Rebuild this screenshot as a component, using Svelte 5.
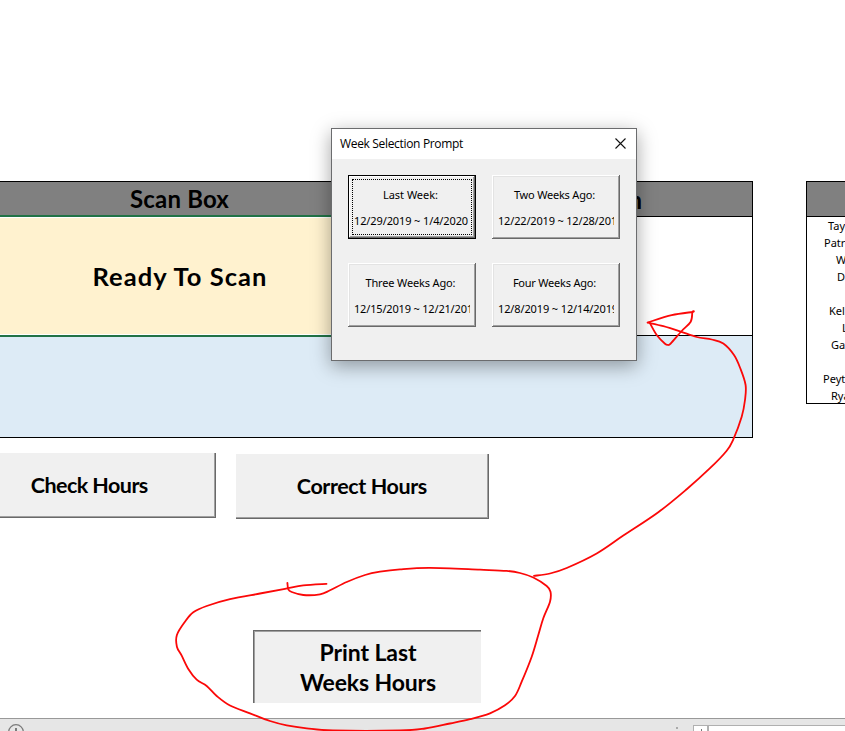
<script>
  const people = ['Taylor', 'Patrick', 'Will', 'Dan', '', 'Kelly', 'Leo', 'Gavin', '', 'Peyton', 'Ryan'];
  const indents = [21, 17, 29, 30, 0, 22, 35, 24, 0, 16, 24];
  const weeks = [
    { title: 'Last Week:', tw: 55, dates: '12/29/2019 ~ 1/4/2020', dw: 114, focused: true },
    { title: 'Two Weeks Ago:', tw: 81, dates: '12/22/2019 ~ 12/28/2019', dw: 125 },
    { title: 'Three Weeks Ago:', tw: 90, dates: '12/15/2019 ~ 12/21/2019', dw: 125 },
    { title: 'Four Weeks Ago:', tw: 83, dates: '12/8/2019 ~ 12/14/2019', dw: 120 }
  ];

  // Spreads the letters of a label so that it spans the given width.
  function span(node, width) {
    const apply = () => {
      node.style.letterSpacing = '0px';
      const gap = (width - node.getBoundingClientRect().width) / node.textContent.length;
      node.style.letterSpacing = `${gap}px`;
      node.style.marginRight = `${-gap}px`;
    };
    apply();
    document.fonts?.ready.then(apply);
  }

  // Smooth curve through a list of points.
  function curve(p) {
    let d = `M${p[0]}`;
    for (let i = 0; i < p.length - 1; i++) {
      const a = p[i - 1] ?? p[i], b = p[i], c = p[i + 1], e = p[i + 2] ?? c;
      d += `C${b[0] + (c[0] - a[0]) / 6},${b[1] + (c[1] - a[1]) / 6} ${c[0] - (e[0] - b[0]) / 6},${c[1] - (e[1] - b[1]) / 6} ${c}`;
    }
    return d;
  }

  const strokes = [
    [[287.4,583],[288.3,589.3],[291.7,592],[303.3,595],[320,594.3],[330,590.3],[346.7,582],[365,575],[380,571.7],[400,569.3],[430,567.9],[480,569.7],[506.7,570.9],[520,573],[533.3,577.5],[546.7,586],[550.5,591.7],[550,601.7],[543.3,618.3],[538.3,635],[531.7,656.7],[521.7,681.7],[515,696],[505,705.3],[490,713.3],[470,719.2],[450,723.5],[425,728.5],[400,730.5],[333,730.5],[306.7,728.3],[286.7,725.3],[270,721],[250,713.3],[230,705.5],[216.7,696],[206.7,686],[196.7,679.7],[188.3,669],[181.7,655.7],[176.9,646.7],[176.9,635],[185,621.7],[193.3,612.3],[206.7,606],[230,599.2],[260,593.5],[285,588.9],[303.3,585.4],[326.5,583.9]],
    [[534,575.9],[550,573.5],[566.7,568],[596.7,553.5],[623.3,535.6],[658.3,512.2],[686.7,489.2],[710,468.2],[726.7,450.7],[733.3,439.3],[741.7,416.7],[745,400],[745.6,385],[740.3,368.3],[734,355],[723.3,343.5],[711.7,339.5],[696.7,337],[680,331.3],[663.3,326.2],[648,322.7]],
    [[647.5,322.5],[671.7,315.2],[692.3,312],[692.3,312],[690.7,321.7],[681.7,331],[670.7,343.5],[668,344.9],[665,343.7],[656.7,335],[650,323.3]]
  ];
</script>

<main>
  <section class="sheet">
    <div class="grid">
      <div class="scan">
        <header><b use:span={99}>Scan Box</b></header>
        <div class="ready"><b use:span={175}>Ready To Scan</b></div>
        <div class="blue"></div>
      </div>
      <div class="info">
        <header><b>n</b></header>
        <div class="blank"></div>
        <div class="blue"></div>
      </div>
    </div>
    <div class="people">
      <header></header>
      {#each people as name, i}
        <div class="person" style:padding-left="{indents[i]}px">{name}</div>
      {/each}
    </div>
  </section>

  <section class="actions">
    <button class="big check"><b use:span={117}>Check Hours</b></button>
    <button class="big correct"><b use:span={130}>Correct Hours</b></button>
  </section>
  <button class="big print"><b use:span={97}>Print Last</b><b use:span={136}>Weeks Hours</b></button>

  <footer>
    <svg class="add" width="18" height="12" viewBox="0 0 18 12"><circle cx="9" cy="9" r="7.3" /><path d="M9 5v7" /></svg>
    <i class="dot"></i>
    <div class="scroll"><div class="cell"><svg width="4" height="4" viewBox="0 0 4 4"><path d="M2 0H3V4H0V2H2Z" /></svg></div></div>
  </footer>

  <div class="dialog">
    <div class="title">
      <span use:span={123}>Week Selection Prompt</span>
      <svg width="11" height="11" viewBox="0 0 11 11"><path d="M.5 .5l10 10M10.5 .5l-10 10" /></svg>
    </div>
    <div class="weeks">
      {#each weeks as w}
        <button class="week" class:focused={w.focused}>
          <span class="line"><span use:span={w.tw}>{w.title}</span></span>
          <span class="line dates"><span use:span={w.dw}>{w.dates}</span></span>
        </button>
      {/each}
    </div>
  </div>

  <svg class="ink" width="845" height="731" viewBox="0 0 845 731">
    {#each strokes as s}<path d={curve(s)} />{/each}
  </svg>
</main>

<style>
  main { position: relative; width: 845px; height: 731px; overflow: hidden; background: #fff; color: #000; display: flex; flex-direction: column; box-sizing: border-box; padding-top: 181px; font-family: Lato, "Liberation Sans", sans-serif; }
  main * { box-sizing: border-box; }
  b, span { white-space: nowrap; }
  b { font-weight: 700; }
  .sheet { display: flex; justify-content: space-between; height: 257px; flex: none; }
  .grid { display: flex; width: 753px; border: solid #000; border-width: 1px 1px 1px 0; }
  .scan { width: 359px; }
  .info { flex: 1; }
  header { background: #808080; height: 33px; display: flex; justify-content: center; align-items: center; font-size: 24px; line-height: 33px; }
  .ready { height: 122px; border: solid #217346; border-width: 2px 0; box-shadow: inset 0 1px #fff, inset 0 -1px #fff; background: #fff2cf; display: flex; align-items: center; justify-content: center; font-size: 25.5px; }
  .blue { background: #ddebf6; height: 100px; }
  .info header { height: 34px; justify-content: flex-end; padding-right: 110px; }
  .blank { height: 120px; border: solid #000; border-width: 1px 0; }
  .info .blue { height: 101px; }
  .people { width: 39px; height: 223px; border: 1px solid #000; border-right: 0; overflow: hidden; }
  .people header { height: 35px; border-bottom: 1px solid #000; }
  .person { height: 17px; font: 11px/18px "Noto Sans", sans-serif; white-space: nowrap; overflow: hidden; }
  button { appearance: none; margin: 0; padding: 0; color: #000; border-radius: 0; border: 0; background: #f0f0f0; font-family: inherit; }
  .actions { display: flex; gap: 20px; padding-top: 15px; height: 81px; flex: none; }
  .big { font-size: 21.5px; display: flex; flex-direction: column; align-items: center; justify-content: center; line-height: 30px; }
  .check { width: 216px; height: 65px; box-shadow: inset -1px -1px #696969, inset -2px -2px #a0a0a0; padding: 0 37px 2px 0; }
  .correct { width: 253px; height: 65px; margin-top: 1px; box-shadow: inset -1px -1px #696969, inset -2px -2px #a0a0a0; padding: 0 1px 2px 0; }
  .print { margin: 111px 0 0 253px; width: 228px; height: 73px; flex: none; box-shadow: inset 1px 1px #696969, inset 2px 2px #a0a0a0; padding: 0 0 0 2px; font-size: 23px; }
  footer { margin-top: 15px; height: 13px; flex: none; background: #e6e6e6; border-top: 1px solid #999; display: flex; align-items: flex-start; }
  .add { margin: 4px 0 0 7px; fill: none; stroke: #7b7b7b; stroke-width: 1.3; overflow: hidden; }
  .add path { stroke-width: 2; }
  .dot { width: 2px; height: 2px; background: #aaa; margin: 8px 0 0 651px; }
  .scroll { margin: 6px 0 0 15px; flex: 1; height: 7px; background: #fff; border: solid #b0b0b0; border-width: 1px 0 0 1px; }
  .cell { width: 15px; height: 6px; border-right: 2px solid #b0b0b0; display: flex; padding: 3px 0 0 5px; overflow: hidden; }
  .cell svg { fill: #777; flex: none; }
  .dialog { position: absolute; left: 331px; top: 128px; width: 306px; height: 233px; border: 1px solid #6b6c6e; background: #f0f0f0; box-shadow: 0 5px 18px rgba(0,0,0,.36); }
  .title { height: 30px; background: #fff; display: flex; justify-content: space-between; align-items: center; padding: 0 10px 0 8px; font: 12px/28px "Open Sans", sans-serif; }
  .title svg { fill: none; stroke: #111; stroke-width: 1.1; margin-top: -2px; }
  .weeks { display: grid; grid-template-columns: 128px 128px; gap: 24px 16px; padding: 16px; }
  .week { height: 64px; font: 11px/26px "Noto Sans", "DejaVu Sans", sans-serif; box-shadow: inset -1px -1px #696969, inset 1px 1px #fff, inset -2px -2px #a0a0a0, inset 2px 2px #e3e3e3; padding: 1px 6px 0; }
  .week.focused { box-shadow: inset 0 0 0 1px #000, inset -2px -2px #696969, inset 2px 2px #fff, inset -3px -3px #a0a0a0; position: relative; }
  .focused::after { content: ""; position: absolute; inset: 4px; border: 1px dotted #000; }
  .line { display: flex; justify-content: center; height: 26px; overflow: hidden; padding-right: 3px; }
  .dates { justify-content: flex-start; padding: 0; }
  .ink { position: absolute; left: 0; top: 0; pointer-events: none; fill: none; stroke: #fb0808; stroke-width: 1.8; stroke-linecap: round; stroke-linejoin: round; }
</style>
